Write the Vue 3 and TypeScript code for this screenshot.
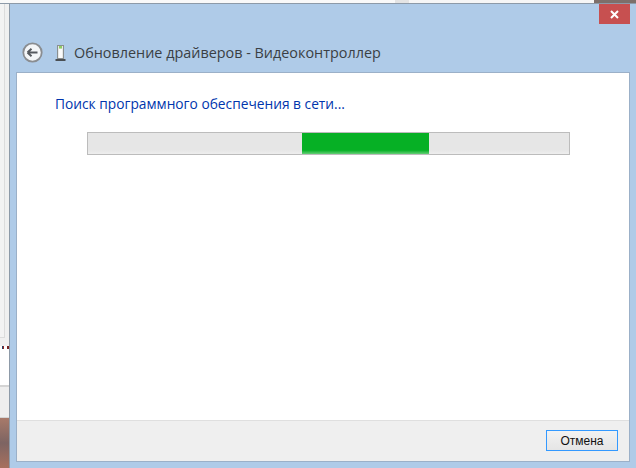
<script setup lang="ts">
const title = 'Обновление драйверов - Видеоконтроллер'
const status = 'Поиск программного обеспечения в сети...'
</script>

<template>
  <div class="desk">
    <div class="backdrop-top">
      <span class="bt-a"></span><span class="bt-b"></span><span class="bt-c"></span><span class="bt-d"></span>
    </div>
    <div class="main-row">
      <div class="backdrop-left">
        <div class="bl-pane"><span class="bl-pane-inner"></span></div>
        <div class="bl-dots"></div>
        <div class="bl-white"></div>
        <div class="bl-grey"></div>
        <div class="bl-photo"></div>
      </div>
      <div class="window">
        <div class="close">
          <svg width="9" height="9" viewBox="0 0 9 9"><path d="M1 1 L8 8 M8 1 L1 8" stroke="#fff" stroke-width="2" fill="none" /></svg>
        </div>
        <div class="header">
          <svg class="back" width="21" height="21" viewBox="0 0 21 21">
            <circle cx="10.5" cy="10.5" r="9.2" fill="#f4f6f8" stroke="#8a8d91" stroke-width="1.8" />
            <path d="M5.5 10.5 H15.5 M5.5 10.5 L9.5 6.8 M5.5 10.5 L9.5 14.2" stroke="#55595e" stroke-width="2" fill="none" />
          </svg>
          <svg class="device" width="11" height="18" viewBox="0 0 11 18">
            <rect x="2.5" y="1.5" width="6" height="13" fill="#e6e9e8" stroke="#8a8f90" />
            <rect x="4" y="2" width="3" height="2.5" fill="#8fce62" />
            <rect x="4" y="5" width="3" height="9" fill="#fbfbfb" />
            <rect x="0.5" y="15" width="10" height="2" fill="#4a4f53" />
          </svg>
          <span class="title">{{ title }}</span>
        </div>
        <div class="panel">
          <div class="body">
            <div class="status">{{ status }}</div>
            <div class="track"><div class="fill"></div></div>
          </div>
          <div class="footer">
            <button class="cancel" type="button">Отмена</button>
          </div>
        </div>
      </div>
    </div>
  </div>
</template>

<style>
html, body { margin: 0; background: #f0f0f0; overflow: hidden; }
</style>

<style scoped>
.desk { width: 636px; height: 468px; display: flex; flex-direction: column; font-family: "Open Sans", "Liberation Sans", sans-serif; overflow: hidden; }
.backdrop-top { height: 3px; display: flex; background: #f0f0f0; border-bottom: 1px solid #8d9aa8; }
.bt-a { width: 395px; background: #f9f9f9; }
.bt-b { width: 14px; background: #e4e4e4; }
.bt-c { width: 185px; background: #f6f6f6; }
.bt-d { flex: 1; background: #7d6f6a; }
.main-row { flex: 1; display: flex; min-height: 0; }
.backdrop-left { width: 9px; display: flex; flex-direction: column; background: #f0f0f0; border-right: 1px solid #8d9aa8; }
.bl-pane { height: 342px; background: #f0f0f0; }
.bl-pane-inner { display: block; width: 4px; height: 333px; background: #f3f3f3; border-right: 1px solid #dcdcdc; border-bottom: 1px solid #dcdcdc; }
.bl-dots { height: 3px; background: linear-gradient(90deg, #fff 0 2px, #246 2px 3px, #922 3px 4px, #fff 4px 7px, #722 7px 9px); }
.bl-white { height: 36px; background: #fff; }
.bl-grey { height: 33px; background: #eeeeee; border-top: 2px solid #d4d4d4; border-bottom: 1px solid #d4d4d4; box-sizing: border-box; }
.bl-photo { flex: 1; background: linear-gradient(180deg, #a87a6a, #7d6462 50%, #a8705e); }
.window { flex: 1; display: flex; flex-direction: column; background: #afcbe8; padding: 0 6px 6px 6px; position: relative; min-width: 0; }
.close { position: absolute; top: 0; right: 6px; width: 31px; height: 20px; background: #c75050; display: flex; align-items: center; justify-content: center; }
.header { height: 68px; display: flex; align-items: flex-end; box-sizing: border-box; padding-bottom: 9px; padding-left: 6px; }
.back { margin-right: 12px; }
.device { margin-right: 8px; margin-bottom: 1px; }
.title { font-size: 14.4px; line-height: 21px; color: #3a3f44; white-space: nowrap; }
.panel { flex: 1; display: flex; flex-direction: column; background: #fff; border: 1px solid #9bb0c8; min-height: 0; }
.body { flex: 1; padding: 21px 38px 0 38px; }
.status { font-size: 13.75px; line-height: 20px; color: #0035ad; white-space: nowrap; }
.track { margin: 18px 0 0 32px; width: 481px; height: 21px; background: linear-gradient(180deg, #e6e6e6 0 80%, #eeeeee); border: 1px solid #bcbcbc; position: relative; }
.fill { position: absolute; left: 214px; top: 0; width: 127px; height: 100%; background: linear-gradient(180deg, #06b025 0 82%, #65cf76); }
.footer { height: 41px; background: #efefef; border-top: 1px solid #dfdfdf; display: flex; align-items: flex-start; justify-content: flex-end; padding: 9px 11px 0 0; box-sizing: border-box; }
.cancel { width: 72px; height: 21px; padding: 0; box-sizing: border-box; border: 1px solid #3399ff; background: linear-gradient(180deg, #f2f2f2, #e5e5e5); font-family: "Liberation Sans", sans-serif; font-size: 12px; color: #111; }
</style>
